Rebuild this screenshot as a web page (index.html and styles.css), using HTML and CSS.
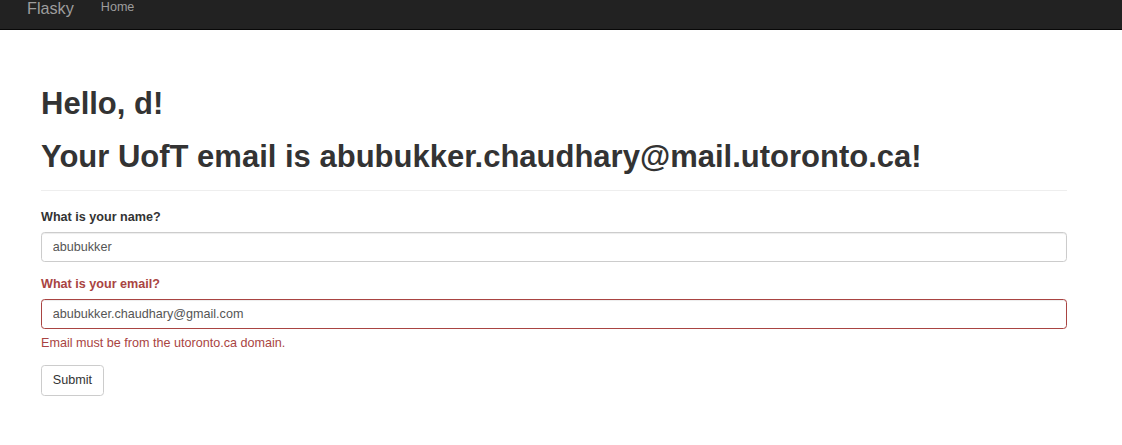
FILE: index.html
```html
<!DOCTYPE html>
<html lang="en">
<head>
<meta charset="utf-8">
<title>Flasky</title>
<link rel="stylesheet" href="styles.css">
</head>
<body>
<nav class="navbar">
  <a class="brand" href="#">Flasky</a>
  <a class="nav-link" href="#">Home</a>
</nav>
<main class="container">
  <div class="page-header">
    <h1>Hello, d!</h1>
    <h1>Your UofT email is abubukker.chaudhary@mail.utoronto.ca!</h1>
  </div>
  <form class="form">
    <div class="form-group">
      <label class="control-label" for="name">What is your name?</label>
      <input class="form-control" id="name" type="text" value="abubukker">
    </div>
    <div class="form-group has-error">
      <label class="control-label" for="email">What is your email?</label>
      <input class="form-control" id="email" type="text" value="abubukker.chaudhary@gmail.com">
      <p class="help-block">Email must be from the utoronto.ca domain.</p>
    </div>
    <button class="btn" type="submit">Submit</button>
  </form>
</main>
</body>
</html>
```
FILE: styles.css
```css
* { box-sizing: border-box; }

body {
  margin: 0;
  font-family: "Liberation Sans", Arial, Helvetica, sans-serif;
  font-size: 12.6px;
  line-height: 18px;
  color: #333;
  background: #fff;
}

.navbar {
  height: 30px;
  background: #222;
  border-bottom: 1px solid #080808;
  display: flex;
  align-items: flex-start;
  padding-left: 27px;
}

.brand {
  font-size: 16.2px;
  line-height: 16px;
  color: #9d9d9d;
  text-decoration: none;
  padding-right: 13.5px;
}

.nav-link {
  font-size: 12.6px;
  line-height: 14px;
  color: #9d9d9d;
  text-decoration: none;
  padding: 0 13.5px;
}

.container {
  width: 1026px;
  margin-left: 41px;
}

.page-header {
  margin-top: 55.8px;
  padding-bottom: 15.6px;
  border-bottom: 1px solid #eee;
  margin-bottom: 16.6px;
}

h1 {
  font-size: 31px;
  line-height: 35.6px;
  font-weight: bold;
  color: #333;
  margin: 0;
}

h1 + h1 { margin-top: 17.4px; }

.form-group { margin-bottom: 13.5px; }

.control-label {
  display: block;
  font-weight: bold;
  line-height: 18px;
  margin-bottom: 6px;
}

.form-control {
  display: block;
  width: 100%;
  height: 30px;
  padding: 0 10.8px;
  font-family: inherit;
  font-size: 12.6px;
  color: #555;
  background: #fff;
  border: 1px solid #ccc;
  border-radius: 3.6px;
  box-shadow: inset 0 1px 1px rgba(0,0,0,.075);
  outline: none;
}

.has-error .control-label,
.has-error .help-block { color: #a94442; }

.has-error .form-control { border-color: #a94442; }

.help-block {
  margin: 4.5px 0 0;
  line-height: 18px;
}

.btn {
  height: 30.6px;
  padding: 0 10.8px;
  font-family: inherit;
  font-size: 12.6px;
  color: #333;
  background: #fff;
  border: 1px solid #ccc;
  border-radius: 3.6px;
}
```
